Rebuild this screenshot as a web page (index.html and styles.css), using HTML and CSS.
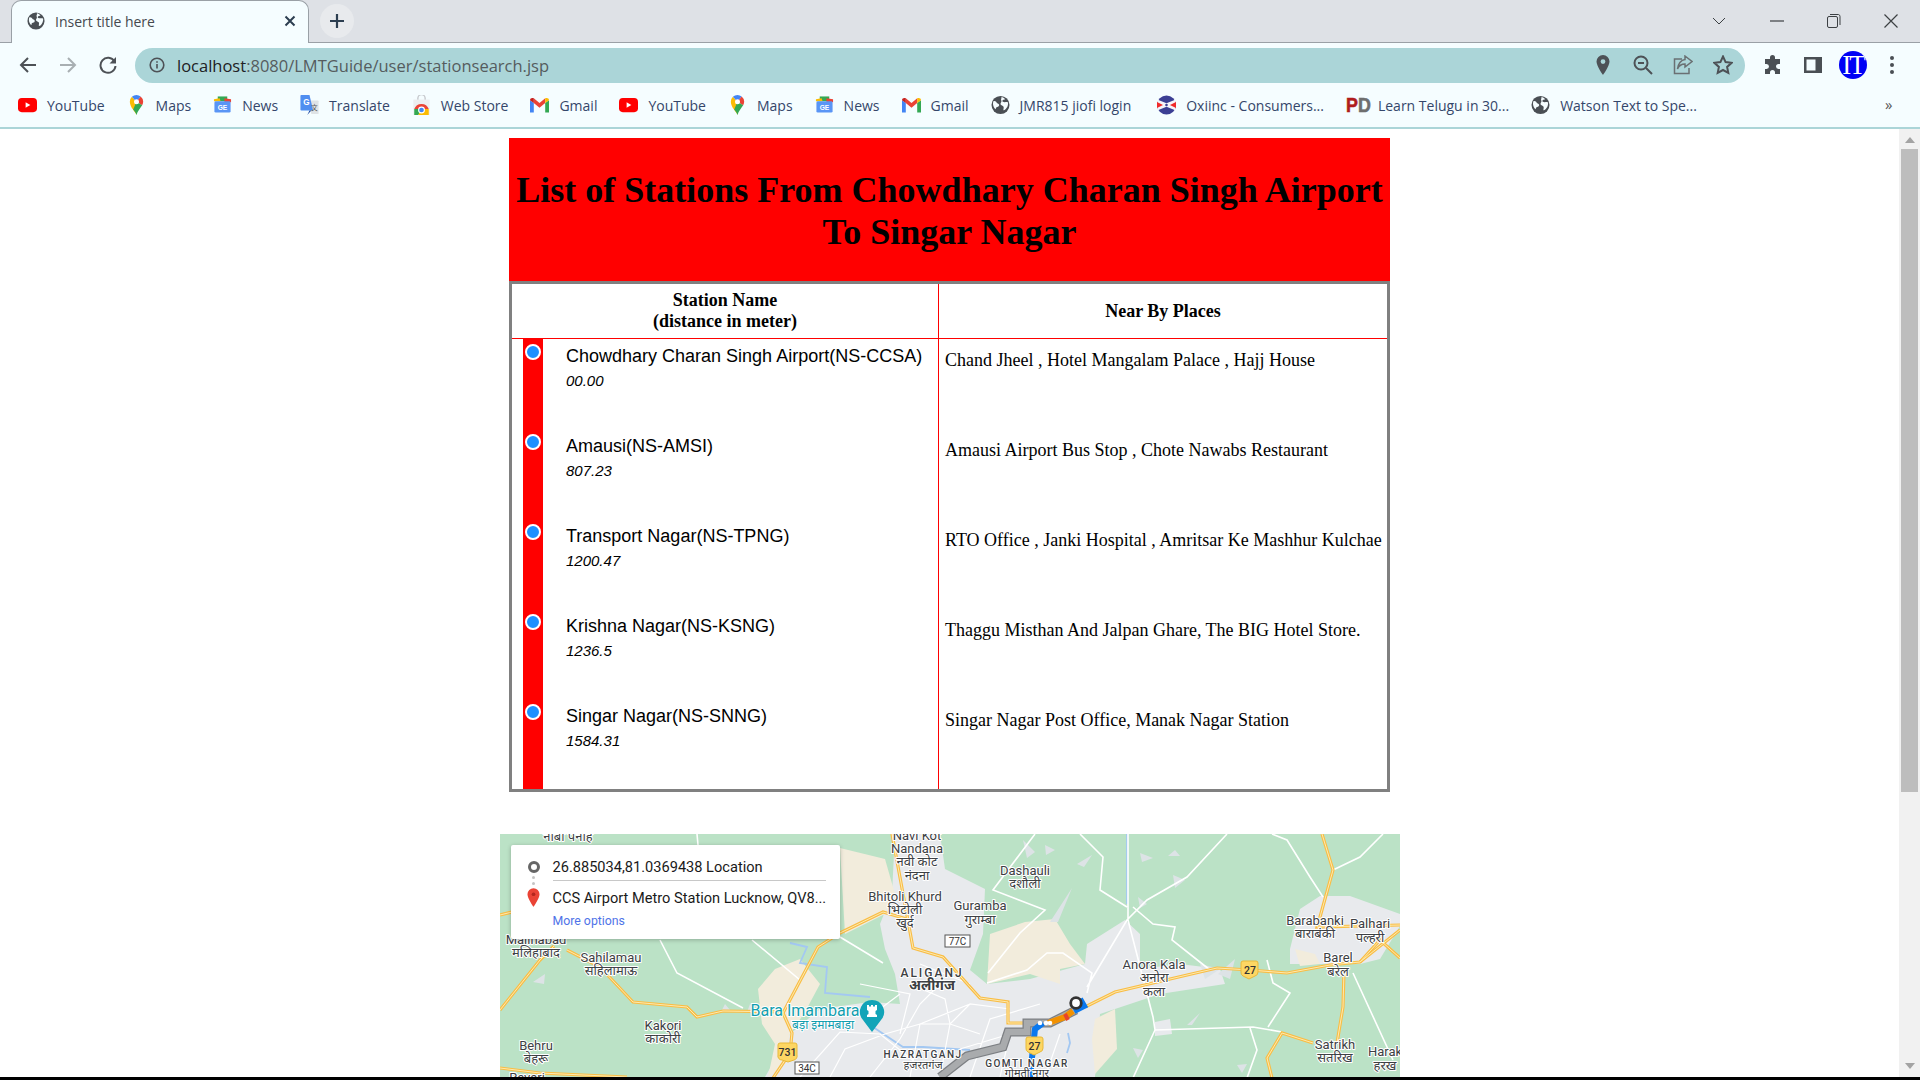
FILE: index.html
```html
<!DOCTYPE html>
<html lang="en">
<head>
<meta charset="utf-8">
<title>Insert title here</title>
<link rel="stylesheet" href="styles.css">
</head>
<body>
<svg class="defs" width="0" height="0">
  <defs>
    <symbol id="globe" viewBox="0 0 20 20"><circle cx="10" cy="10" r="9.500" fill="#4a4f54"/><path d="M2.500 6c2-.5 3 .5 3.500 1.500s2 .5 2.500 2-1 2.500-2 2.500-1.500 1-1.500 2.500c-1-.5-2-2-2.500-3.500S2 7.500 2.500 6zM11 1.500c1.500.5 3 1 4 2.500-1 .5-2.500.5-3 1.500s1 1.500 2.500 1.500 2.500-.5 3.500.5c0 2.500-.5 4-1.500 5.500s-2 2.500-3 2.500.5-3-.5-4-3-1-3-2.500 1-2 1-3-1-2 0-3z" fill="#f5fdff"/></symbol>
    <symbol id="yt" viewBox="0 0 20 16"><rect width="20" height="15" y=".5" rx="4" fill="#f00"/><path d="M8 5l5 3-5 3z" fill="#fff"/></symbol>
    <symbol id="maps" viewBox="0 0 16 24"><path d="M8 24c-1-4-8-9-8-16a8 8 0 0 1 2.500-5.800L8 8z" fill="#fbbc04"/><path d="M2.500 2.200A8 8 0 0 1 8 0a8 8 0 0 1 5 1.800L8 8z" fill="#4285f4"/><path d="M13 1.800A8 8 0 0 1 16 8c0 1.500-.5 3-1.200 4.200L8 8z" fill="#ea4335"/><path d="M14.800 12.200C13 15.500 9 19 8 24c-.6-2.500-2.500-4.500-4-6.500L8 8z" fill="#34a853"/><circle cx="8" cy="8" r="3" fill="#fff"/></symbol>
    <symbol id="news" viewBox="0 0 20 20"><path d="M5 1h10v5H5z" fill="#34a853"/><path d="M1 4l6-1 1 3H1z" fill="#fbbc04"/><path d="M12 3l7 1v3h-7z" fill="#ea4335"/><rect x="1.500" y="6" width="17" height="12" rx="1.500" fill="#5a95f5"/><text class="news-glyph" x="10" y="15.500">GE</text></symbol>
    <symbol id="translate" viewBox="0 0 20 22"><path d="M9 6h10a1 1 0 0 1 1 1v14H12z" fill="#dfe3e6"/><path d="M1 0h9l4 17H1a1 1 0 0 1-1-1V1a1 1 0 0 1 1-1z" fill="#4f8ef0"/><path d="M10 17l-2.500 5L12 17z" fill="#1a46a0"/><text class="tr-g" x="6.500" y="11.500">G</text><text class="tr-x" x="15.500" y="16">文</text></symbol>
    <symbol id="store" viewBox="0 0 20 22"><path d="M6 6V3.500a4 4 0 0 1 8 0V6" fill="none" stroke="#c5c8cc" stroke-width="1.500"/><path d="M1 5h18v17H1z" fill="#eceef0"/><path d="M2 15.500a8.500 8.500 0 0 1 16 0z" fill="#ea4335"/><path d="M2 15.500h8l-3.500 6.500H2z" fill="#34a853"/><path d="M10 15.500h8V22H6.500z" fill="#fbbc04"/><circle cx="10" cy="16.500" r="3.800" fill="#fff"/><circle cx="10" cy="16.500" r="2.600" fill="#4285f4"/></symbol>
    <symbol id="gmail" viewBox="0 0 20 16"><path d="M0 3v13h4V6z" fill="#4285f4"/><path d="M20 3v13h-4V6z" fill="#34a853"/><path d="M4 6l6 5 6-5V1l-6 5-6-5z" fill="#ea4335"/><path d="M0 3c0-2.500 2.500-3 4-2v5z" fill="#c5221f"/><path d="M20 3c0-2.500-2.500-3-4-2v5z" fill="#fbbc04"/></symbol>
    <symbol id="oxi" viewBox="0 0 22 22"><circle cx="11" cy="11" r="11" fill="#3c3f94"/><path d="M1 5l10 4 10-4 1 6-1 6-10-4-10 4-1-6z" fill="#f5f5fa"/><path d="M0 7.500L7 11l-7 3.500z" fill="#f02b2b"/><path d="M22 7.500L15 11l7 3.500z" fill="#f02b2b"/><circle cx="11" cy="11" r="1.500" fill="#3c3f94"/></symbol>
  </defs>
</svg>

<header class="chrome">
  <div class="tabstrip">
    <div class="tab">
      <svg class="tab-icon"><use href="#globe"/></svg>
      <span class="tab-title">Insert title here</span>
      <svg class="tab-close" viewBox="0 0 12 12"><path d="M1.500 1.500l9 9M10.500 1.500l-9 9"/></svg>
    </div>
    <div class="newtab"><svg viewBox="0 0 16 16"><path d="M8 1v14M1 8h14"/></svg></div>
    <div class="winctl">
      <svg class="wc wc-chev" viewBox="0 0 14 8"><path d="M1 1l6 6 6-6"/></svg>
      <svg class="wc wc-min" viewBox="0 0 14 2"><path d="M0 1h14"/></svg>
      <svg class="wc wc-max" viewBox="0 0 14 14"><rect x=".5" y="2.500" width="10" height="11" rx="1.500"/><path d="M3 .5h8.500a2 2 0 0 1 1.500 2V11"/></svg>
      <svg class="wc wc-close" viewBox="0 0 14 14"><path d="M.5.5l13 13M13.500.5l-13 13"/></svg>
    </div>
  </div>

  <div class="toolbar">
    <svg class="nav" viewBox="0 0 18 18"><path class="ln" d="M17 9H2M9 2L2 9l7 7"/></svg>
    <svg class="nav nav-off" viewBox="0 0 18 18"><path class="ln" d="M1 9h15M9 2l7 7-7 7"/></svg>
    <svg class="nav" viewBox="0 0 18 18"><path class="ln" d="M15.500 5.500A7.500 7.500 0 1 0 16.500 10"/><path class="solid" d="M17 1v6.500h-6.500z"/></svg>
    <div class="omnibox">
      <svg class="info" viewBox="0 0 16 16"><circle cx="8" cy="8" r="6.800"/><path d="M8 7v4.500M8 4.200v1.600"/></svg>
      <span class="url"><b>localhost</b>:8080/LMTGuide/user/stationsearch.jsp</span>
      <div class="omni-icons">
        <svg viewBox="0 0 14 20"><path class="solid" d="M7 0a6.500 6.500 0 0 0-6.500 6.500C.5 11 7 20 7 20s6.500-9 6.500-13.500A6.500 6.500 0 0 0 7 0zm0 9a2.400 2.400 0 1 1 0-4.800A2.400 2.400 0 0 1 7 9z"/></svg>
        <svg viewBox="0 0 20 20"><circle class="ln" cx="8" cy="8" r="6.500"/><path class="ln" d="M13 13l6 6M5 8h6"/></svg>
        <svg viewBox="0 0 20 20"><path class="ln-thin" d="M9 4H1.500v14.500H16V13"/><path class="ln-thin" d="M12 1l7 5.500-7 5.500V9c-4 0-6 1.500-7.500 5C5 9 8 5 12 4.500z"/></svg>
        <svg viewBox="0 0 20 20"><path class="ln" d="M10 1.500l2.600 5.600 6 .7-4.500 4.100 1.200 6L10 15l-5.300 2.900 1.200-6L1.400 7.800l6-.7z"/></svg>
      </div>
    </div>
    <div class="tool-icons">
      <svg viewBox="0 0 20 20"><path class="solid dark" d="M7 2.500a2.500 2.500 0 0 1 5 0V4h5v5h-1.500a2.500 2.500 0 0 0 0 5H17v5h-5v-1.500a2.500 2.500 0 0 0-5 0V19H2v-5h1.500a2.500 2.500 0 0 0 0-5H2V4h5z"/></svg>
      <svg viewBox="0 0 20 20"><path class="solid dark" d="M1 2h18v16H1zM3.500 4.500v11h9v-11z"/></svg>
      <div class="avatar"><span class="avatar-txt">IT</span></div>
      <svg class="dots" viewBox="0 0 4 18"><circle cx="2" cy="2" r="2"/><circle cx="2" cy="9" r="2"/><circle cx="2" cy="16" r="2"/></svg>
    </div>
  </div>

  <nav class="bookmarks">
    <a class="bm"><svg class="bi"><use href="#yt"/></svg>YouTube</a>
    <a class="bm"><svg class="bi"><use href="#maps"/></svg>Maps</a>
    <a class="bm"><svg class="bi"><use href="#news"/></svg>News</a>
    <a class="bm"><svg class="bi"><use href="#translate"/></svg>Translate</a>
    <a class="bm"><svg class="bi"><use href="#store"/></svg>Web Store</a>
    <a class="bm"><svg class="bi"><use href="#gmail"/></svg>Gmail</a>
    <a class="bm"><svg class="bi"><use href="#yt"/></svg>YouTube</a>
    <a class="bm"><svg class="bi"><use href="#maps"/></svg>Maps</a>
    <a class="bm"><svg class="bi"><use href="#news"/></svg>News</a>
    <a class="bm"><svg class="bi"><use href="#gmail"/></svg>Gmail</a>
    <a class="bm"><svg class="bi"><use href="#globe"/></svg>JMR815 jiofi login</a>
    <a class="bm bm-oxi"><svg class="bi"><use href="#oxi"/></svg>Oxiinc - Consumers...</a>
    <a class="bm"><span class="pd"><i>P</i><i>D</i></span>Learn Telugu in 30...</a>
    <a class="bm"><svg class="bi"><use href="#globe"/></svg>Watson Text to Spe...</a>
    <span class="more">»</span>
  </nav>
</header>

<div class="viewport">
  <main class="page">
    <section class="routes">
      <h1 class="title">List of Stations From Chowdhary Charan Singh Airport To Singar Nagar</h1>
      <div class="panel">
        <div class="row head">
          <div class="cell th">Station Name<br>(distance in meter)</div>
          <div class="cell th th-places">Near By Places</div>
        </div>
        <div class="row stop">
          <div class="cell station"><span class="rail"><span class="dot"></span></span><div class="st-text"><div class="st-name">Chowdhary Charan Singh Airport(NS-CCSA)</div><div class="st-dist">00.00</div></div></div>
          <div class="cell places">Chand Jheel , Hotel Mangalam Palace , Hajj House</div>
        </div>
        <div class="row stop">
          <div class="cell station"><span class="rail"><span class="dot"></span></span><div class="st-text"><div class="st-name">Amausi(NS-AMSI)</div><div class="st-dist">807.23</div></div></div>
          <div class="cell places">Amausi Airport Bus Stop , Chote Nawabs Restaurant</div>
        </div>
        <div class="row stop">
          <div class="cell station"><span class="rail"><span class="dot"></span></span><div class="st-text"><div class="st-name">Transport Nagar(NS-TPNG)</div><div class="st-dist">1200.47</div></div></div>
          <div class="cell places">RTO Office , Janki Hospital , Amritsar Ke Mashhur Kulchae</div>
        </div>
        <div class="row stop">
          <div class="cell station"><span class="rail"><span class="dot"></span></span><div class="st-text"><div class="st-name">Krishna Nagar(NS-KSNG)</div><div class="st-dist">1236.5</div></div></div>
          <div class="cell places">Thaggu Misthan And Jalpan Ghare, The BIG Hotel Store.</div>
        </div>
        <div class="row stop">
          <div class="cell station"><span class="rail"><span class="dot"></span></span><div class="st-text"><div class="st-name">Singar Nagar(NS-SNNG)</div><div class="st-dist">1584.31</div></div></div>
          <div class="cell places">Singar Nagar Post Office, Manak Nagar Station</div>
        </div>
      </div>
    </section>

    <section class="map">
      <svg class="map-canvas" viewBox="0 0 900 243" width="900" height="243">
        <defs>
          <path id="r1" d="M585 173L615 158L653 149L717 134L750 136L787 139L830 131L860 128L900 96"/>
          <path id="r2" d="M822 0L833 36L820 83L817 93L900 91"/>
          <path id="r3" d="M844 136L843 173L837 209"/>
          <path id="r4" d="M860 128L880 106L900 124"/>
          <path id="r5" d="M772 244L767 224L782 199L813 209"/>
          <path id="r6" d="M392 0L413 114L443 123L480 164L508 168L508 189L527 189"/>
          <path id="r7" d="M410 86L383 78L340 99L318 113L283 179L292 199L290 219L273 244"/>
          <path id="r8" d="M0 176L40 126L54 112"/>
          <path id="r9" d="M67 116L100 133L133 168L187 173L197 183L223 177L283 178"/>
          <path id="r10" d="M0 234L40 239L127 243"/>
          <path id="r11" d="M0 81L12 78"/>
        </defs>
        <path class="urban" d="M380 90L392 60L395 0L440 0L445 35L485 55L483 100L470 136L487 150L530 145L585 130L587 110L625 86L640 100L640 135L680 130L720 135L725 150L660 160L600 180L595 243L265 243L290 200L320 175L370 168L400 170L395 140L385 115Z"/>
        <path class="urban" d="M790 115L800 75L820 62L850 62L900 80L900 92L880 125L860 130L790 130Z"/>
        <path class="urban" d="M655 188L670 185L672 200L655 202Z"/>
        <path class="tan" d="M340 14L385 25L395 60L385 80L345 100Z"/>
        <path class="tan" d="M258 155L275 135L300 125L320 150L305 178L290 200L280 235L268 243L275 210L262 190Z"/>
        <path class="tan" d="M487 150L490 100L525 88L555 85L570 110L585 130L560 135L560 150L530 140Z"/>
        <path class="tan" d="M595 185L615 175L617 215L595 240L592 205Z"/>
        <path class="tan" d="M795 115L815 120L820 130L800 132Z"/>
        <path class="grey-tri" d="M523 6L535 18L527 24ZM545 11L555 16L546 21ZM577 30L592 21L584 33ZM640 19L653 24L642 28ZM668 22L680 22L675 16ZM673 41L685 46L675 54ZM638 63L647 70L640 74ZM550 88L572 54L558 88ZM687 191L700 179L692 191ZM633 214L643 216L638 224ZM737 231L747 230L742 239ZM33 148L45 140L44 150ZM250 170L256 178L247 178ZM225 170L230 176L222 176ZM700 130L720 135L705 145ZM735 125L730 145L718 140Z"/>

        <g class="water">
          <path d="M290 109L307 113L300 129L327 133L325 159L370 163M373 193L403 213L423 213L470 216M627 0L627 70M568 199L570 209L567 219"/>
        </g>
        <g class="road-w">
          <path d="M535 0L493 56L545 76L520 99L488 139M628 0L628 86L653 183L655 196L633 244M727 0L687 43L647 66L627 86L587 153M655 196L753 193L782 198M750 194L757 216L747 244M580 0L603 23L600 56L627 73M633 73L653 90L675 93L672 106L710 136M772 0L787 6L810 43L823 63M883 0L860 23L833 36M767 126L773 149L790 159L768 193M853 139L893 226M160 106L177 139L243 174M252 106L300 146M340 103L383 129M197 0L198 11M587 159L592 139L563 119L547 119L527 136L487 149"/>
          <path class="thin" d="M330 243L345 215L385 200L420 190L470 170M370 243L400 205L420 170L440 150M410 243L420 190L450 190L480 200M440 243L450 190L470 170L510 175M470 243L490 185L540 170M300 243L340 198L380 200L420 232M360 150L410 160L400 200M500 243L510 200L540 190M545 243L560 200M420 130L470 150M410 150L445 165L450 190M460 215L510 200M380 175L400 160"/>
        </g>
        <g class="road-y-out"><use href="#r1"/><use href="#r2"/><use href="#r3"/><use href="#r4"/><use href="#r5"/><use href="#r6"/><use href="#r7"/><use href="#r8"/><use href="#r9"/><use href="#r10"/><use href="#r11"/></g>
        <g class="road-y-in"><use href="#r1"/><use href="#r2"/><use href="#r3"/><use href="#r4"/><use href="#r5"/><use href="#r6"/><use href="#r7"/><use href="#r8"/><use href="#r9"/><use href="#r10"/><use href="#r11"/></g>

        <path class="route-out" d="M440 243L467 222L503 213L508 198L527 198L527 189L550 189L576 176"/>
        <path class="route-grey" d="M440 243L467 222L503 213L508 198L527 198L527 189L550 189L576 176"/>
        <path class="route-blue" d="M530 243L535 195L543 189"/>
        <path class="route-blue" d="M574 177L584 172L580 165"/>
        <path class="route-orange" d="M548 189L565 183L573 177"/>
        <path class="route-red" d="M565 180L568 186"/>
        <circle class="dotw" cx="540" cy="189" r="2.300"/><circle class="dotw" cx="546" cy="189" r="2.300"/><circle class="dotw" cx="550" cy="189" r="2.300"/>
        <circle class="start" cx="576" cy="169" r="5.300"/>

        <g class="lbl">
          <text x="68" y="7">नाबी पनाह</text>
          <text x="417" y="6">Navi Kot</text><text x="417" y="19">Nandana</text><text x="417" y="32">नवी कोट</text><text x="417" y="46">नंदना</text>
          <text x="405" y="67">Bhitoli Khurd</text><text x="405" y="80">भिटोली</text><text x="405" y="93">खुर्द</text>
          <text x="36" y="110">Malihabad</text><text x="36" y="123">मलिहाबाद</text>
          <text x="111" y="128">Sahilamau</text><text x="111" y="141">सहिलामाऊ</text>
          <text x="163" y="196">Kakori</text><text x="163" y="209">काकोरी</text>
          <text x="36" y="216">Behru</text><text x="36" y="229">बेहरू</text>
          <text x="27" y="248">Revari</text>
          <text x="525" y="41">Dashauli</text><text x="525" y="54">दशौली</text>
          <text x="480" y="76">Guramba</text><text x="480" y="90">गुराम्बा</text>
          <text x="654" y="135">Anora Kala</text><text x="654" y="148">अनोरा</text><text x="654" y="162">कला</text>
          <text x="815" y="91">Barabanki</text><text x="815" y="104">बाराबंकी</text>
          <text x="870" y="94">Palhari</text><text x="870" y="108">पल्हरी</text>
          <text x="838" y="128">Barel</text><text x="838" y="142">बरेल</text>
          <text x="835" y="215">Satrikh</text><text x="835" y="228">सतरिख</text>
          <text x="885" y="222">Harak</text><text x="885" y="236">हरख</text>
        </g>
        <g class="lbl-city">
          <text class="big" x="432" y="143">ALIGANJ</text>
          <text x="423" y="224">HAZRATGANJ</text>
          <text x="527" y="233">GOMTI NAGAR</text>
        </g>
        <g class="lbl-hi-b">
          <text class="big" x="432" y="156">अलीगंज</text>
          <text x="423" y="235">हजरतगंज</text>
          <text x="527" y="243">गोमती नगर</text>
        </g>
        <g class="lbl-teal">
          <text class="big" x="305" y="182">Bara Imambara</text>
          <text x="323" y="195">बड़ा इमामबाड़ा</text>
        </g>
        <path class="pin-teal" d="M372 166a12 12 0 0 1 9 20l-9 12-9-12a12 12 0 0 1 9-20z"/>
        <path class="pin-white" d="M367 171h2v1.500h2V171h2v1.500h2V171h2v5l-1.500 1v3l1.500 1v2h-10v-2l1.500-1v-3l-1.500-1z"/>

        <g class="shield"><path d="M278 211a2 2 0 0 1 2-2h15a2 2 0 0 1 2 2v10a4 4 0 0 1-3 5l-6 2-6-2a4 4 0 0 1-4-5z"/><path d="M741 129a2 2 0 0 1 2-2h13a2 2 0 0 1 2 2v9a4 4 0 0 1-3 4l-6 3-6-3a4 4 0 0 1-2-4z"/><path d="M526 205a2 2 0 0 1 2-2h13a2 2 0 0 1 2 2v9a4 4 0 0 1-3 4l-6 3-6-3a4 4 0 0 1-2-4z"/></g>
        <g class="shield-t"><text x="287.500" y="222">731</text><text x="750" y="140">27</text><text x="534.500" y="216">27</text></g>
        <g class="plate"><rect x="295" y="228" width="24" height="12"/><rect x="445" y="101" width="25" height="12"/></g>
        <g class="plate-t"><text x="307" y="238">34C</text><text x="457.500" y="111">77C</text></g>
      </svg>
      <aside class="dirs">
        <div class="dirs-rail">
          <span class="ring"></span><span class="pip"></span><span class="pip"></span>
          <svg class="redpin" viewBox="0 0 14 20"><path d="M7 0a6.500 6.500 0 0 0-6.500 6.500C.5 11 7 20 7 20s6.500-9 6.500-13.500A6.500 6.500 0 0 0 7 0z"/><circle cx="7" cy="6.500" r="2"/></svg>
        </div>
        <div class="dirs-body">
          <div class="dirs-line first">26.885034,81.0369438 Location</div>
          <div class="dirs-line">CCS Airport Metro Station Lucknow, QV8...</div>
          <div class="dirs-more">More options</div>
        </div>
      </aside>
    </section>
  </main>
  <div class="scrollbar">
    <svg class="sb-arrow" viewBox="0 0 10 6"><path d="M5 0l5 6H0z"/></svg>
    <div class="sb-track"><div class="sb-thumb"></div></div>
    <svg class="sb-arrow" viewBox="0 0 10 6"><path d="M0 0h10L5 6z"/></svg>
  </div>
</div>
<div class="taskedge"></div>
</body>
</html>
```
FILE: styles.css
```css
* { box-sizing: border-box; }
html, body { margin: 0; height: 100%; }
body { height: 1080px; overflow: hidden; display: flex; flex-direction: column; background: #fff; font-family: "Liberation Serif", serif; color: #000; }
.defs { position: absolute; }
svg { display: block; flex: none; }

/* browser chrome */
.chrome { flex: none; font-family: "Open Sans", "Noto Sans", sans-serif; background: #f5fdff; }
.tabstrip { height: 43px; background: #dee1e6; border-bottom: 1px solid #9aa0a6; display: flex; align-items: center; padding-left: 11px; }
.tab { width: 298px; height: 43px; margin-bottom: -1px; background: #f5fdff; border: 1px solid #9aa0a6; border-bottom: 0; border-radius: 10px 10px 0 0; display: flex; align-items: center; padding: 0 12px 2px 15px; align-self: flex-start; }
.tab-icon { width: 18px; height: 18px; }
.tab-title { margin-left: 10px; font-size: 14px; color: #45494e; flex: 1; }
.tab-close { width: 12px; height: 12px; fill: none; stroke: #2c3e50; stroke-width: 2; }
.newtab { width: 34px; height: 34px; border-radius: 50%; background: #e8eaed; margin-left: 11px; display: flex; align-items: center; justify-content: center; }
.newtab svg { width: 16px; height: 16px; fill: none; stroke: #2c3e50; stroke-width: 2.200; }
.winctl { margin-left: auto; display: flex; align-items: center; height: 40px; padding-right: 22px; }
.wc { fill: none; stroke: #3c4043; stroke-width: 1; }
.wc-chev { width: 14px; height: 8px; margin-right: 44px; }
.wc-min { width: 14px; height: 2px; margin-right: 43px; stroke-width: 1.200; }
.wc-max { width: 14px; height: 14px; margin-right: 43px; }
.wc-close { width: 14px; height: 14px; stroke-width: 1.200; }

.toolbar { height: 48px; display: flex; align-items: center; padding: 0 16px 4px 19px; }
.nav { width: 18px; height: 18px; margin-right: 22px; }
.nav-off { opacity: .45; }
.ln { fill: none; stroke: #4d5156; stroke-width: 2; }
.ln-thin { fill: none; stroke: #6a7073; stroke-width: 1.500; }
.solid { fill: #4d5156; }
.solid.dark { fill: #4a4f54; }
.omnibox { width: 1610px; height: 35px; margin-left: -4px; background: #abd5d8; border-radius: 18px; display: flex; align-items: center; padding: 0 12px 0 14px; }
.info { width: 16px; height: 16px; fill: none; stroke: #4d5156; stroke-width: 1.600; }
.url { margin-left: 12px; font-size: 16.500px; color: #555c5e; white-space: nowrap; }
.url b { font-weight: 400; color: #202124; }
.omni-icons { margin-left: auto; display: flex; align-items: center; gap: 20px; }
.omni-icons svg { width: 20px; height: 20px; }
.tool-icons { display: flex; align-items: center; margin-left: 18px; }
.tool-icons > svg { width: 20px; height: 20px; margin-right: 20px; }
.avatar { width: 28px; height: 28px; border-radius: 50%; background: #0000f5; margin-right: 23px; margin-left: -4px; display: flex; align-items: center; justify-content: center; overflow: hidden; }
.avatar-txt { font-family: "Liberation Serif", serif; font-weight: 400; font-size: 27px; line-height: 28px; letter-spacing: -2px; color: #fff; }
.tool-icons > svg.dots { width: 4px; height: 18px; margin: 0; fill: #4a4f54; }

.bookmarks { height: 38px; padding: 0 0 8px 18px; border-bottom: 2px solid #abd5d8; display: flex; align-items: center; gap: 22px; position: relative; }
.bm { display: flex; align-items: center; gap: 10px; font-size: 14px; color: #34466a; white-space: nowrap; }
.bm-oxi { margin-left: 4px; }
.bi { width: 19px; height: 20px; }
.pd { width: 22px; height: 20px; display: flex; transform: scaleX(.85); transform-origin: left center; font-family: "Liberation Sans", sans-serif; font-weight: 700; font-size: 21px; line-height: 20px; }
.pd i { font-style: normal; color: #b01c1c; -webkit-text-stroke: .6px #b01c1c; }
.pd i + i { color: #6e6e6e; -webkit-text-stroke: .6px #6e6e6e; }
.more { position: absolute; left: 1885px; top: 3px; font-size: 15px; color: #555; }
.news-glyph { font: 700 7px "Liberation Sans", sans-serif; fill: #fff; text-anchor: middle; }
.tr-g { font: 700 9px "Liberation Sans", sans-serif; fill: #fff; text-anchor: middle; }
.tr-x { font: 400 7px "Noto Sans CJK SC", sans-serif; fill: #555; text-anchor: middle; }

/* page */
.viewport { flex: 1; min-height: 0; display: flex; overflow: hidden; }
.page { flex: 1; min-width: 0; display: flex; flex-direction: column; align-items: center; padding-top: 9px; overflow: hidden; }
.routes { width: 881px; flex: none; }
.title { margin: 0; background: #f00; font-size: 36px; line-height: 42px; font-weight: 700; text-align: center; padding: 31px 0 28px; height: 143px; }
.panel { border: 3px solid #808080; }
.row { display: grid; grid-template-columns: 427px 1fr; }
.cell:first-child { border-right: 1px solid #f00; }
.head { height: 55px; border-bottom: 1px solid #f00; }
.th { display: flex; align-items: center; justify-content: center; text-align: center; font-weight: 700; font-size: 18px; line-height: 21px; }
.stop { height: 90px; }
.station { display: flex; padding-left: 11px; }
.rail { width: 20px; background: #f00; flex: none; display: flex; justify-content: center; padding-top: 5px; align-items: flex-start; }
.dot { width: 16px; height: 16px; border-radius: 50%; background: #1e90ff; border: 2px solid #fff; }
.st-text { margin-left: 23px; padding-top: 5px; font-family: "Liberation Sans", sans-serif; }
.st-name { font-size: 18px; line-height: 24px; }
.st-dist { margin-top: 4px; font-size: 15px; line-height: 18px; font-style: italic; }
.places { font-size: 18px; line-height: 21px; padding: 11px 0 0 6px; white-space: nowrap; }

/* map */
.map { position: relative; width: 900px; height: 243px; margin-top: 42px; flex: none; overflow: hidden; background: #bbe2c6; }
.urban { fill: #e8eaed; }
.tan { fill: #f2ecdc; }
.grey-tri { fill: #dde3e6; }
.water path { fill: none; stroke: #a3c8f2; stroke-width: 1.800; }
.road-w path { fill: none; stroke: #fff; stroke-width: 1.600; }
.road-w path.thin { stroke-width: 1.200; }
.road-y-out use { fill: none; stroke: #f9bd45; stroke-width: 3.200; }
.road-y-in use { fill: none; stroke: #fdeab0; stroke-width: 1; }
.route-out { fill: none; stroke: #7c7f83; stroke-width: 9; }
.route-grey { fill: none; stroke: #a9abad; stroke-width: 6.500; }
.route-blue { fill: none; stroke: #0a78ee; stroke-width: 6; }
.route-orange { fill: none; stroke: #f29100; stroke-width: 6; }
.route-red { fill: none; stroke: #e8432d; stroke-width: 4; }
.dotw { fill: #fff; }
.start { fill: #fff; stroke: #333; stroke-width: 2.800; }
.map text { font-family: Roboto, "Noto Sans", sans-serif; text-anchor: middle; paint-order: stroke; stroke-linejoin: round; }
.lbl text { font-size: 13px; fill: #3c4043; stroke: #fff; stroke-width: 2; }
.lbl-city text { font-size: 10px; font-weight: 500; letter-spacing: 1.500px; fill: #3c4043; stroke: #fff; stroke-width: 2; }
.lbl-city text.big { font-size: 12px; letter-spacing: 2px; }
.lbl-hi-b text { font-size: 11px; fill: #3c4043; stroke: #fff; stroke-width: 2; }
.lbl-hi-b text.big { font-size: 14px; font-weight: 700; }
.lbl-teal text { font-size: 12px; fill: #129eaf; stroke: #fff; stroke-width: 2; }
.lbl-teal text.big { font-size: 16px; }
.pin-teal { fill: #12a4b8; }
.pin-white { fill: #fff; }
.shield path { fill: #fdd663; stroke: #e8b93a; }
.map .shield-t text { font-size: 10.500px; font-weight: 500; fill: #333; }
.plate rect { fill: #fff; stroke: #555; }
.map .plate-t text { font-size: 10px; fill: #333; }

.dirs { position: absolute; left: 11px; top: 11px; width: 329px; height: 94px; background: #fff; border-radius: 2px; box-shadow: 0 1px 4px rgba(0,0,0,.25); display: flex; font-family: Roboto, "Noto Sans", sans-serif; }
.dirs-rail { width: 42px; flex: none; display: flex; flex-direction: column; align-items: center; padding: 16px 0 0 4px; gap: 3px; }
.ring { width: 12px; height: 12px; border-radius: 50%; border: 3px solid #666; }
.pip { width: 3px; height: 3px; border-radius: 50%; background: #c4c4c4; }
.redpin { width: 13px; height: 19px; margin-top: 0; }
.redpin path { fill: #ea4335; }
.redpin circle { fill: #b3261e; }
.dirs-body { flex: 1; padding-right: 14px; }
.dirs-line { height: 31px; font-size: 14.600px; line-height: 18px; padding-top: 8px; color: #1a1a1a; white-space: nowrap; }
.dirs-line.first { border-bottom: 1px solid #c8c8c8; padding-top: 13px; height: 36px; line-height: 18px; }
.dirs-more { font-size: 12.300px; line-height: 15px; color: #4f73e8; margin-top: 2px; }

/* scrollbar */
.scrollbar { width: 21px; flex: none; background: #f1f1f1; display: flex; flex-direction: column; align-items: center; }
.sb-arrow { width: 10px; height: 6px; margin: 8px 0; fill: #a3a3a3; }
.sb-track { flex: 1; width: 100%; padding: 0 2px; margin-top: -1px; }
.sb-thumb { height: 643px; background: #bdbdbd; margin-top: -1px; }
.taskedge { height: 3px; flex: none; background: #000; }
```
